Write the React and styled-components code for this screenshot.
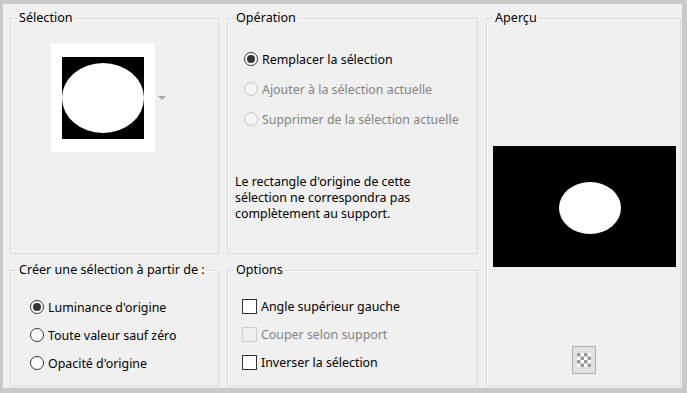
import React from 'react';
import styled, { createGlobalStyle } from 'styled-components';

const GlobalStyle = createGlobalStyle`
  html, body {
    margin: 0;
    padding: 0;
    overflow: hidden;
  }
  body {
    font-family: "Noto Sans", "Open Sans", sans-serif;
    font-size: 12px;
    color: #000;
  }
`;

const Window = styled.div`
  width: 687px;
  height: 393px;
  box-sizing: border-box;
  padding: 4px 5px 5px 3px;
  background: #c9c9c9;
`;

const Panel = styled.div`
  height: 100%;
  box-sizing: border-box;
  padding: 6px 0 0 7px;
  background: #f0f0f0;
  display: grid;
  grid-template-columns: 209px 251px 195px;
  grid-template-rows: 244px 125px;
  column-gap: 8px;
  row-gap: 8px;
`;

const Group = styled.fieldset`
  margin: 0;
  padding: 0;
  min-width: 0;
  border: 1px solid #d9d9d9;
  box-shadow: inset 1px 1px 0 #fbfbfb;
  grid-column: ${p => p.$col};
  grid-row: ${p => p.$row};
`;

const Legend = styled.legend`
  margin-left: 6px;
  padding: 0 2px;
  line-height: 16px;
  font-size: 12.6px;
`;

const SelectionBody = styled.div`
  display: flex;
  align-items: center;
  padding: 17px 0 0 40px;
`;

const Thumb = styled.div`
  width: 104px;
  height: 109px;
  box-sizing: border-box;
  padding: 14px 11px 13px 11px;
  background: #fff;
`;

const DropArrow = styled.div`
  margin-left: 3px;
  width: 0;
  height: 0;
  border-left: 4px solid transparent;
  border-right: 4px solid transparent;
  border-top: 4px solid #a8a8a8;
`;

const List = styled.div`
  display: flex;
  flex-direction: column;
  gap: ${p => p.$gap}px;
  padding: ${p => p.$pad};
`;

const Row = styled.div`
  display: flex;
  align-items: center;
  gap: 4px;
  height: 20px;
  font-size: 12.4px;
  color: ${p => (p.$disabled ? '#838383' : '#000')};
  white-space: nowrap;
`;

const RadioMark = styled.span`
  width: 14px;
  height: 14px;
  box-sizing: border-box;
  border-radius: 50%;
  border: 1px solid ${p => (p.$disabled ? '#c4c4c4' : '#333')};
  background: ${p => (p.$disabled ? '#f5f5f5' : '#fff')};
  display: flex;
  align-items: center;
  justify-content: center;
  flex: none;
  &::after {
    content: '';
    width: 8px;
    height: 8px;
    border-radius: 50%;
    background: #333;
    display: ${p => (p.$checked ? 'block' : 'none')};
  }
`;

const CheckMark = styled.span`
  width: 15px;
  height: 15px;
  box-sizing: border-box;
  border: 1px solid ${p => (p.$disabled ? '#cccccc' : '#333')};
  background: ${p => (p.$disabled ? '#f0f0f0' : '#fff')};
  flex: none;
`;

const Note = styled.p`
  margin: 45px 0 0 0;
  padding-left: 7px;
  line-height: 16px;
  font-size: 12.4px;
`;

const PreviewBody = styled.div`
  display: flex;
  flex-direction: column;
  align-items: center;
  padding-top: 120px;
`;

const Preview = styled.div`
  width: 183px;
  height: 121px;
  background: #000;
  margin-left: 2px;
`;

const CheckerButton = styled.button`
  margin-top: 79px;
  width: 24px;
  height: 28px;
  padding: 0;
  border: 1px solid #adadad;
  background: #e1e1e1;
  display: flex;
  align-items: center;
  justify-content: center;
`;

const Radio = ({ label, checked, disabled }) => (
  <Row $disabled={disabled}>
    <RadioMark $checked={checked} $disabled={disabled} />
    <span>{label}</span>
  </Row>
);

const Check = ({ label, disabled }) => (
  <Row $disabled={disabled}>
    <CheckMark $disabled={disabled} />
    <span>{label}</span>
  </Row>
);

const Checker = () => {
  const cells = [];
  for (let r = 0; r < 4; r++) {
    for (let c = 0; c < 4; c++) {
      if ((r + c) % 2 === 0) {
        cells.push(<rect key={`${r}-${c}`} x={c * 3.5} y={r * 3.5} width="3.5" height="3.5" fill="#9a9a9a" />);
      }
    }
  }
  return (
    <svg width="14" height="14" viewBox="0 0 14 14">
      <rect width="14" height="14" fill="#fff" />
      {cells}
    </svg>
  );
};

export default function App() {
  return (
    <>
      <GlobalStyle />
      <Window>
        <Panel>
          <Group $col="1" $row="1">
            <Legend>Sélection</Legend>
            <SelectionBody>
              <Thumb>
                <svg width="82" height="82" viewBox="0 0 82 82">
                  <rect width="82" height="82" fill="#000" />
                  <ellipse cx="41" cy="41" rx="41" ry="35" fill="#fff" />
                </svg>
              </Thumb>
              <DropArrow />
            </SelectionBody>
          </Group>

          <Group $col="2" $row="1">
            <Legend>Opération</Legend>
            <List $gap={10} $pad="23px 0 0 16px">
              <Radio label="Remplacer la sélection" checked />
              <Radio label="Ajouter à la sélection actuelle" disabled />
              <Radio label="Supprimer de la sélection actuelle" disabled />
            </List>
            <Note>
              Le rectangle d'origine de cette
              <br />
              sélection ne correspondra pas
              <br />
              complètement au support.
            </Note>
          </Group>

          <Group $col="3" $row="1 / span 2">
            <Legend>Aperçu</Legend>
            <PreviewBody>
              <Preview>
                <svg width="183" height="121" viewBox="0 0 183 121">
                  <ellipse cx="97" cy="62" rx="31" ry="26" fill="#fff" />
                </svg>
              </Preview>
              <CheckerButton>
                <Checker />
              </CheckerButton>
            </PreviewBody>
          </Group>

          <Group $col="1" $row="2">
            <Legend>Créer une sélection à partir de :</Legend>
            <List $gap={8} $pad="19px 0 0 19px">
              <Radio label="Luminance d'origine" checked />
              <Radio label="Toute valeur sauf zéro" />
              <Radio label="Opacité d'origine" />
            </List>
          </Group>

          <Group $col="2" $row="2">
            <Legend>Options</Legend>
            <List $gap={8} $pad="18px 0 0 14px">
              <Check label="Angle supérieur gauche" />
              <Check label="Couper selon support" disabled />
              <Check label="Inverser la sélection" />
            </List>
          </Group>
        </Panel>
      </Window>
    </>
  );
}
